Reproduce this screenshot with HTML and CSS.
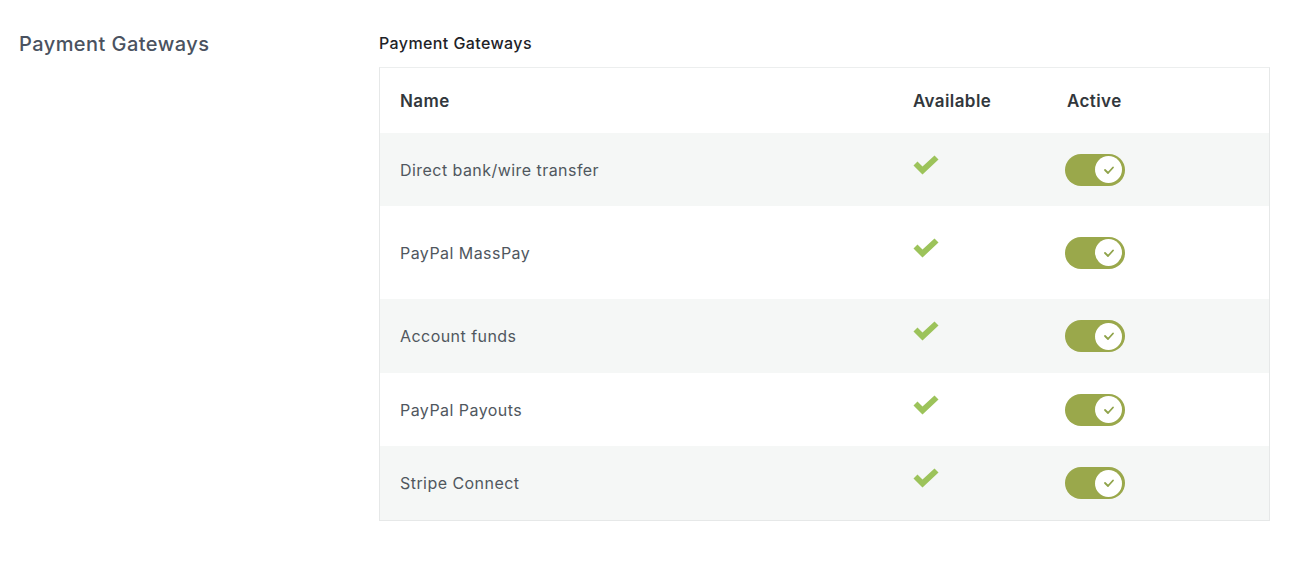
FILE: index.html
```html
<!DOCTYPE html>
<html>
<head>
<meta charset="utf-8">
<link rel="stylesheet" href="styles.css">
</head>
<body>
<div class="page">
  <aside class="side">
    <h2 class="side-title">Payment Gateways</h2>
  </aside>
  <section class="main">
    <div class="label">Payment Gateways</div>
    <div class="table">
      <div class="row head">
        <div class="c-name">Name</div>
        <div class="c-avail">Available</div>
        <div class="c-active">Active</div>
      </div>
      <div class="row alt">
        <div class="c-name">Direct bank/wire transfer</div>
        <div class="c-avail"><svg class="check" viewBox="0 0 26 18"><path d="M0.5 9.5 L4.5 5.5 L9.5 10.5 L21.5 -0.5 L25.5 3.5 L9.5 18.5 Z" fill="#9cc35a"/></svg></div>
        <div class="c-active"><span class="toggle"><span class="knob"><svg viewBox="0 0 12 10"><path d="M2 5 L5 8 L10 2.5" fill="none" stroke="#8fa34a" stroke-width="1.8" stroke-linecap="round" stroke-linejoin="round"/></svg></span></span></div>
      </div>
      <div class="row tall">
        <div class="c-name">PayPal MassPay</div>
        <div class="c-avail"><svg class="check" viewBox="0 0 26 18"><path d="M0.5 9.5 L4.5 5.5 L9.5 10.5 L21.5 -0.5 L25.5 3.5 L9.5 18.5 Z" fill="#9cc35a"/></svg></div>
        <div class="c-active"><span class="toggle"><span class="knob"><svg viewBox="0 0 12 10"><path d="M2 5 L5 8 L10 2.5" fill="none" stroke="#8fa34a" stroke-width="1.8" stroke-linecap="round" stroke-linejoin="round"/></svg></span></span></div>
      </div>
      <div class="row alt">
        <div class="c-name">Account funds</div>
        <div class="c-avail"><svg class="check" viewBox="0 0 26 18"><path d="M0.5 9.5 L4.5 5.5 L9.5 10.5 L21.5 -0.5 L25.5 3.5 L9.5 18.5 Z" fill="#9cc35a"/></svg></div>
        <div class="c-active"><span class="toggle"><span class="knob"><svg viewBox="0 0 12 10"><path d="M2 5 L5 8 L10 2.5" fill="none" stroke="#8fa34a" stroke-width="1.8" stroke-linecap="round" stroke-linejoin="round"/></svg></span></span></div>
      </div>
      <div class="row">
        <div class="c-name">PayPal Payouts</div>
        <div class="c-avail"><svg class="check" viewBox="0 0 26 18"><path d="M0.5 9.5 L4.5 5.5 L9.5 10.5 L21.5 -0.5 L25.5 3.5 L9.5 18.5 Z" fill="#9cc35a"/></svg></div>
        <div class="c-active"><span class="toggle"><span class="knob"><svg viewBox="0 0 12 10"><path d="M2 5 L5 8 L10 2.5" fill="none" stroke="#8fa34a" stroke-width="1.8" stroke-linecap="round" stroke-linejoin="round"/></svg></span></span></div>
      </div>
      <div class="row alt">
        <div class="c-name">Stripe Connect</div>
        <div class="c-avail"><svg class="check" viewBox="0 0 26 18"><path d="M0.5 9.5 L4.5 5.5 L9.5 10.5 L21.5 -0.5 L25.5 3.5 L9.5 18.5 Z" fill="#9cc35a"/></svg></div>
        <div class="c-active"><span class="toggle"><span class="knob"><svg viewBox="0 0 12 10"><path d="M2 5 L5 8 L10 2.5" fill="none" stroke="#8fa34a" stroke-width="1.8" stroke-linecap="round" stroke-linejoin="round"/></svg></span></span></div>
      </div>
    </div>
  </section>
</div>
</body>
</html>
```
FILE: styles.css
```css
* { box-sizing: border-box; }
html, body { margin: 0; padding: 0; background: #fff; }
body { font-family: Inter, "Open Sans", "Liberation Sans", sans-serif; }
.page { display: flex; padding-top: 31px; }
.side { width: 379px; padding-left: 19px; flex: none; }
.side-title {
  margin: 0;
  font-size: 20px;
  font-weight: 500;
  color: #4a5260;
  line-height: 26px;
  letter-spacing: 0.45px;
}
.main { width: 891px; flex: none; }
.label {
  font-size: 16px;
  font-weight: 500;
  color: #1e2327;
  line-height: 22px;
  letter-spacing: 0.4px;
  margin-top: 1px;
  margin-bottom: 13px;
}
.table {
  border: 1px solid #e6e8e8;
  border-top-color: #eceeee;
}
.row {
  display: grid;
  grid-template-columns: 533px 154px 1fr;
  align-items: center;
  height: 74px;
  font-size: 16px;
  letter-spacing: 0.45px;
  color: #50575e;
  background: #fff;
}
.row.alt { background: #f5f7f6; }
.row.alt:nth-child(2) { height: 73px; }
.row:nth-child(5) { height: 73px; }
.row.tall { height: 93px; }
.row.head {
  height: 65px;
  font-size: 17px;
  font-weight: 600;
  color: #32373c;
  letter-spacing: 0.4px;
}
.c-name { padding-left: 20px; }
.c-avail { display: flex; }
.check { width: 26px; height: 18px; margin-top: -10px; display: block; overflow: visible; }
.c-active { display: flex; }
.toggle {
  width: 60px;
  height: 32px;
  border-radius: 16px;
  background: #9aa84b;
  display: flex;
  align-items: center;
  justify-content: flex-end;
  padding-right: 3px;
  margin-left: -2px;
}
.knob {
  width: 27px;
  height: 27px;
  border-radius: 50%;
  background: #fff;
  display: flex;
  align-items: center;
  justify-content: center;
}
.knob svg { width: 12px; height: 10px; display: block; }
```
